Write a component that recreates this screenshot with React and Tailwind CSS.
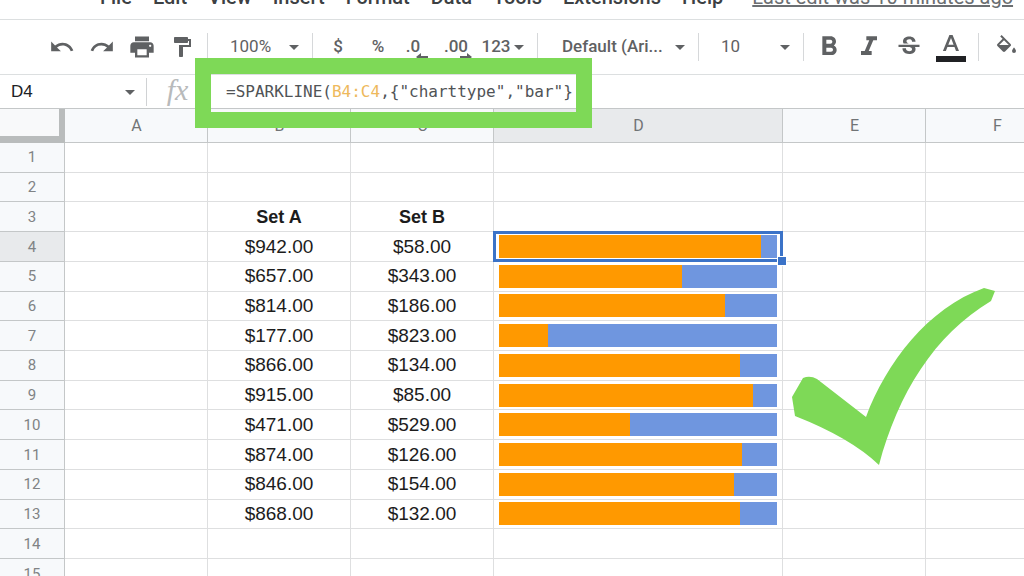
import {
  MdArrowDropDown,
  MdFormatBold,
  MdFormatItalic,
  MdFormatPaint,
  MdPrint,
  MdRedo,
  MdStrikethroughS,
  MdUndo,
} from "react-icons/md";

const menus = ["File", "Edit", "View", "Insert", "Format", "Data", "Tools", "Extensions", "Help"];

const columns = [
  { name: "A", width: "w-[143px]" },
  { name: "B", width: "w-[143px]" },
  { name: "C", width: "w-[143px]" },
  { name: "D", width: "w-[289px]" },
  { name: "E", width: "w-[143px]" },
  { name: "F", width: "w-[143px]" },
];

const firstDataRow = 4;
const pairs = [
  [942, 58],
  [657, 343],
  [814, 186],
  [177, 823],
  [866, 134],
  [915, 85],
  [471, 529],
  [874, 126],
  [846, 154],
  [868, 132],
];

const rows = Array.from({ length: 15 }, (_, i) => i + 1);

function MenuBar() {
  return (
    <nav className="flex h-5 shrink-0 items-end gap-[21px] whitespace-nowrap border-b border-[#dcdfe0] pb-3 pl-[100px] text-[20px] leading-5 font-medium text-[#3c4043]">
      {menus.map((menu) => (
        <button key={menu} type="button">
          {menu}
        </button>
      ))}
      <a href="#history" className="ml-2 font-normal text-[#6b6e71] underline">
        Last edit was 10 minutes ago
      </a>
    </nav>
  );
}

function Divider() {
  return <div className="h-7 w-px shrink-0 bg-[#d6d8da]" />;
}

function ToolButton({ label, className = "w-10", children }) {
  return (
    <button
      type="button"
      aria-label={label}
      className={`relative flex h-8 shrink-0 items-center justify-center ${className}`}
    >
      {children}
    </button>
  );
}

function ToolSelect({ label, value, className }) {
  return (
    <div className="relative flex h-8 items-center">
      <select aria-label={label} className={`appearance-none bg-transparent outline-none ${className}`}>
        <option>{value}</option>
      </select>
      <MdArrowDropDown className="pointer-events-none absolute right-0 size-6" />
    </div>
  );
}

function DecimalArrow({ flip }) {
  return (
    <svg viewBox="0 0 12 8" className="absolute right-0 bottom-0.5 h-2 w-3" fill="currentColor">
      {flip ? <path d="M12 3v2H5v3L0 4l5-4v3z" /> : <path d="M0 3v2h7v3l5-4-5-4v3z" />}
    </svg>
  );
}

function Toolbar() {
  return (
    <div className="flex h-[55px] shrink-0 items-center border-b border-[#dcdfe0] pl-[42px] text-[17px] text-[#5f6163]">
      <ToolButton label="Undo">
        <MdUndo className="size-[26px]" />
      </ToolButton>
      <ToolButton label="Redo">
        <MdRedo className="size-[26px]" />
      </ToolButton>
      <ToolButton label="Print">
        <MdPrint className="size-7" />
      </ToolButton>
      <ToolButton label="Paint format">
        <MdFormatPaint className="size-6" />
      </ToolButton>

      <div className="w-[5px] shrink-0" />
      <Divider />
      <div className="flex w-[104px] shrink-0 pl-[22px]">
        <ToolSelect label="Zoom" value="100%" className="w-[76px]" />
      </div>

      <Divider />
      <div className="flex w-56 shrink-0 pl-[5px] font-medium">
        <ToolButton label="Format as currency">$</ToolButton>
        <ToolButton label="Format as percent">%</ToolButton>
        <ToolButton label="Decrease decimal places" className="w-[30px]">
          .0
          <DecimalArrow flip />
        </ToolButton>
        <ToolButton label="Increase decimal places" className="ml-3 w-8">
          .00
          <DecimalArrow />
        </ToolButton>
        <ToolButton label="More formats" className="ml-2 w-[52px]">
          123
          <MdArrowDropDown className="-ml-1 size-6" />
        </ToolButton>
      </div>

      <Divider />
      <div className="flex w-40 shrink-0 pl-6 font-medium">
        <ToolSelect label="Font" value="Default (Ari..." className="w-[130px]" />
      </div>

      <Divider />
      <div className="flex w-[104px] shrink-0 pl-[22px]">
        <ToolSelect label="Font size" value="10" className="w-[76px]" />
      </div>

      <Divider />
      <div className="flex w-[174px] shrink-0 pl-[5px]">
        <ToolButton label="Bold">
          <MdFormatBold className="size-8" />
        </ToolButton>
        <ToolButton label="Italic">
          <MdFormatItalic className="size-8" />
        </ToolButton>
        <ToolButton label="Strikethrough">
          <MdStrikethroughS className="size-7" />
        </ToolButton>
        <ToolButton label="Text color" className="w-11">
          <svg viewBox="0 0 30 30" className="size-[30px]">
            <path
              d="M13.4 3h3.2l6.4 16h-3l-1.5-4h-7.1L9.9 19h-3zM12.3 12.7h5.3L15 5.9z"
              fill="currentColor"
            />
            <path d="M0 24h30v6H0z" fill="#202124" />
          </svg>
        </ToolButton>
      </div>

      <Divider />
      <ToolButton label="Fill color" className="ml-[7px] w-10">
        <svg viewBox="0 0 24 24" className="size-6" fill="currentColor">
          <path d="M16.56 8.94 7.62 0 6.21 1.41l2.38 2.38-5.15 5.15a1.49 1.49 0 0 0 0 2.12l5.5 5.5c.29.29.68.44 1.06.44s.77-.15 1.06-.44l5.5-5.5c.59-.58.59-1.53 0-2.12zM5.21 10 10 5.21 14.79 10zM20 12.5s-2 2.17-2 3.5a2 2 0 0 0 4 0c0-1.33-2-3.5-2-3.5z" />
        </svg>
      </ToolButton>
    </div>
  );
}

function FormulaBar() {
  return (
    <div className="flex h-[33px] shrink-0 items-center bg-white text-[#202124]">
      <div className="relative flex items-center">
        <input
          aria-label="Name box"
          defaultValue="D4"
          className="w-[146px] pl-[11px] font-['Liberation_Sans',sans-serif] text-[17px] outline-none"
        />
        <MdArrowDropDown className="pointer-events-none absolute right-1 size-6 text-[#5f6163]" />
      </div>
      <div className="h-7 w-px bg-[#d0d2d4]" />
      <span className="w-[61px] pb-1 text-center font-['Liberation_Serif',serif] text-[30px] leading-7 text-[#b8babb] italic">
        fx
      </span>
      <div
        role="textbox"
        aria-label="Formula"
        className="ml-[18px] whitespace-nowrap font-['DejaVu_Sans_Mono',monospace] text-[16px] text-[#505356]"
      >
        =SPARKLINE(<span className="text-[#eeb95c]">B4:C4</span>,{'{"charttype","bar"}'}
      </div>
    </div>
  );
}

function Sparkline({ a, b }) {
  return (
    <div className="mx-[5px] flex h-[23px] bg-[#6f96df]">
      <div className="bg-[#ff9900]" style={{ width: `${(a / (a + b)) * 100}%` }} />
    </div>
  );
}

function Cell({ column, row }) {
  const pair = pairs[row - firstDataRow];
  const base = "border-r border-b border-[#dedfe0] p-0 text-center";

  if (row === 3 && (column === "B" || column === "C")) {
    return <td className={`${base} text-[18px] font-bold`}>{column === "B" ? "Set A" : "Set B"}</td>;
  }
  if (pair && column === "B") return <td className={base}>${pair[0]}.00</td>;
  if (pair && column === "C") return <td className={base}>${pair[1]}.00</td>;
  if (pair && column === "D") {
    const selected = row === 4;
    return (
      <td className={`${base} ${selected ? "relative z-10" : ""}`}>
        <Sparkline a={pair[0]} b={pair[1]} />
        {selected && (
          <div className="absolute -inset-px border-3 border-[#3b73c8]">
            <div className="absolute -right-[7px] -bottom-[7px] size-[10px] border border-white bg-[#3b73c8]" />
          </div>
        )}
      </td>
    );
  }
  return <td className={base} />;
}

function Sheet() {
  return (
    <table className="h-[481px] w-max shrink-0 border-separate border-spacing-0 border-t border-[#c4c7c8] font-['Liberation_Sans',sans-serif] text-[19px] leading-6 text-[#1c1c1c]">
      <thead className="font-['Roboto',sans-serif] text-[16px] text-[#717476]">
        <tr className="h-[34px]">
          <th className="border-r-[6px] border-b-[7px] border-[#b9bcbc] bg-[#f8f9fa] p-0">
            <div className="w-[59px]" />
          </th>
          {columns.map(({ name, width }) => (
            <th
              key={name}
              className={`border-r border-b border-[#c4c7c8] p-0 font-normal ${
                name === "D" ? "bg-[#e8eaec]" : "bg-[#f7f9fb]"
              }`}
            >
              <div className={`-mr-px ${width}`}>{name}</div>
            </th>
          ))}
        </tr>
      </thead>
      <tbody>
        {rows.map((row) => (
          <tr key={row}>
            <th
              className={`border-r border-b border-[#c4c7c8] p-0 font-['Roboto',sans-serif] text-[15px] font-normal text-[#808385] ${
                row === 4 ? "bg-[#e8eaec]" : "bg-[#f7f9fb]"
              }`}
            >
              {row}
            </th>
            {columns.map(({ name }) => (
              <Cell key={name} column={name} row={row} />
            ))}
          </tr>
        ))}
      </tbody>
    </table>
  );
}

function Checkmark() {
  return (
    <svg
      viewBox="792 288 204 178"
      className="absolute top-72 left-[792px] z-20 h-[178px] w-[204px]"
      fill="#7ed957"
    >
      <path d="M792 397L803 378Q810 375 817 379L866 417C886 363 928 308 984 288L995 291L991 301C934 335 898 394 879 465Q851 438 795 416Z" />
    </svg>
  );
}

export default function App() {
  return (
    <div className="relative flex h-screen flex-col overflow-hidden bg-white font-['Roboto',sans-serif]">
      <MenuBar />
      <Toolbar />
      <FormulaBar />
      <Sheet />
      {/* callouts on top of the sheet */}
      <div className="pointer-events-none absolute top-[58px] left-[195px] h-[70px] w-[397px] border-16 border-[#7ed957]" />
      <Checkmark />
    </div>
  );
}
